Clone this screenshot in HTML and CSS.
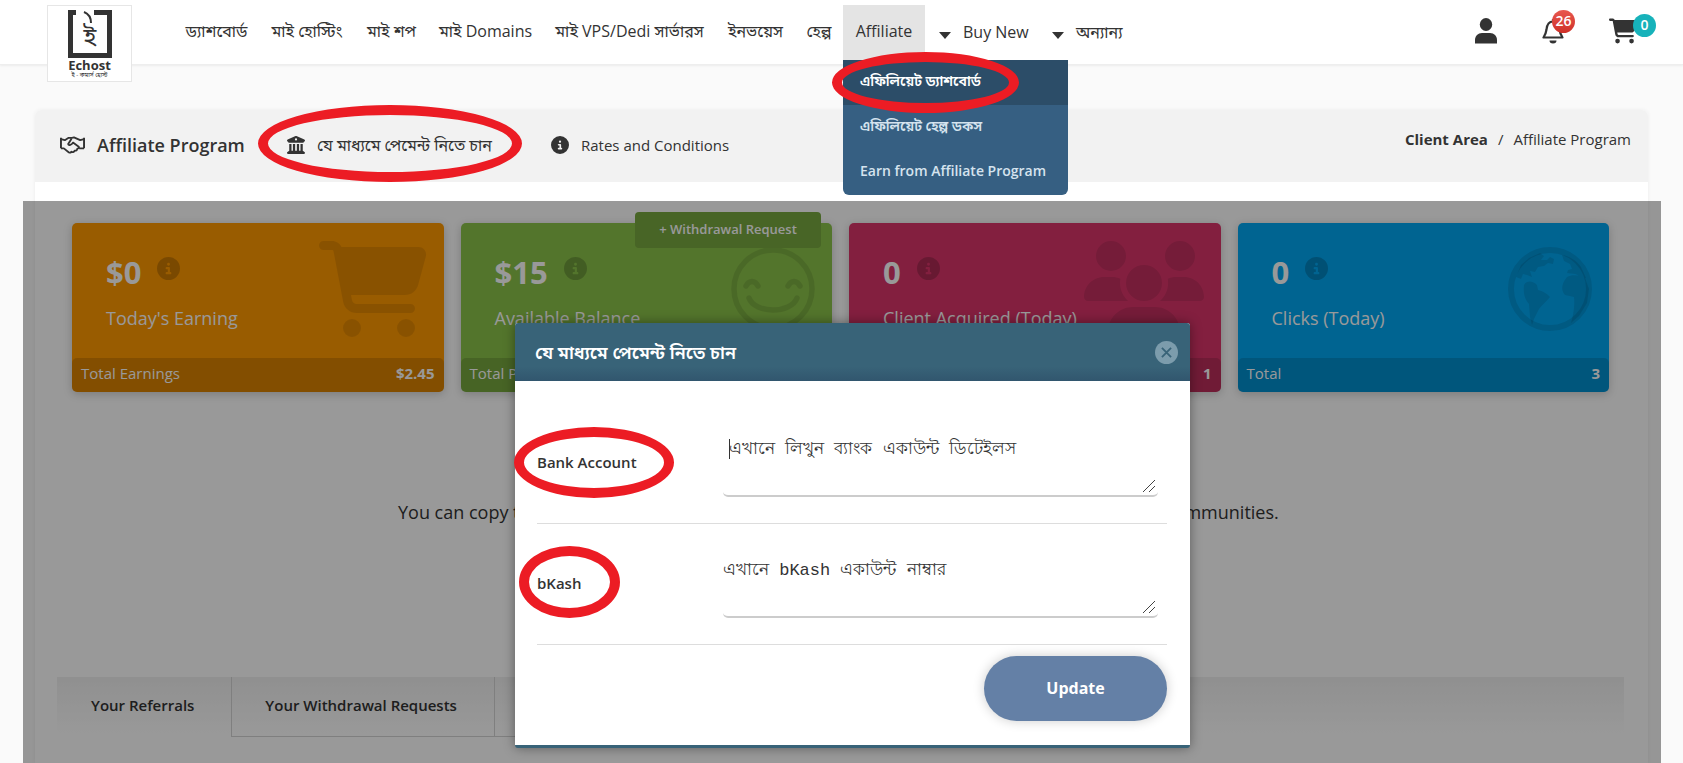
FILE: index.html
```html
<!DOCTYPE html>
<html lang="bn">
<head>
  <meta charset="UTF-8">
  <meta name="viewport" content="width=device-width, initial-scale=1.0">
  <title>Affiliate Program - Echost</title>
  <link rel="stylesheet" href="styles.css">
</head>
<body>
  <svg class="sprite" aria-hidden="true">
    <symbol id="i-cart" viewBox="0 0 576 512"><path d="M0 24C0 10.700 10.700 0 24 0H69.500c22 0 41.500 12.800 50.600 32h411c26.300 0 45.500 25 38.600 50.400l-41 152.300c-8.500 31.400-37 53.300-69.500 53.300H170.700l5.400 28.500c2.200 11.300 12.100 19.500 23.600 19.500H488c13.300 0 24 10.700 24 24s-10.700 24-24 24H199.700c-34.600 0-64.300-24.600-70.700-58.500L77.400 54.500c-.7-3.800-4-6.500-7.900-6.500H24C10.700 48 0 37.300 0 24zM128 464a48 48 0 1 1 96 0 48 48 0 1 1 -96 0zm336-48a48 48 0 1 1 0 96 48 48 0 1 1 0-96z"/></symbol>
    <symbol id="i-users" viewBox="0 0 640 512"><path d="M144 0a80 80 0 1 1 0 160A80 80 0 1 1 144 0zM512 0a80 80 0 1 1 0 160A80 80 0 1 1 512 0zM0 298.700C0 239.800 47.800 192 106.700 192h42.700c15.900 0 31 3.500 44.600 9.700c-1.300 7.200-1.900 14.700-1.900 22.300c0 38.200 16.800 72.500 43.300 96H21.300C9.600 320 0 310.400 0 298.700zM405.300 320c26.600-23.500 43.300-57.800 43.300-96c0-7.600-.7-15-1.900-22.300c13.600-6.300 28.700-9.700 44.600-9.700h42.700C592.200 192 640 239.800 640 298.700c0 11.800-9.600 21.300-21.300 21.300H405.300zM224 224a96 96 0 1 1 192 0 96 96 0 1 1 -192 0zM128 485.300C128 411.700 187.700 352 261.300 352H378.700C452.300 352 512 411.700 512 485.300c0 14.700-11.900 26.700-26.700 26.700H154.700c-14.700 0-26.700-11.900-26.700-26.700z"/></symbol>
    <symbol id="i-info" viewBox="0 0 512 512"><path d="M256 512A256 256 0 1 0 256 0a256 256 0 1 0 0 512zM216 336h24V272H216c-13.300 0-24-10.700-24-24s10.700-24 24-24h48c13.300 0 24 10.700 24 24v88h8c13.300 0 24 10.700 24 24s-10.700 24-24 24H216c-13.300 0-24-10.700-24-24s10.700-24 24-24zm40-208a32 32 0 1 1 0 64 32 32 0 1 1 0-64z"/></symbol>
    <symbol id="i-bank" viewBox="0 0 512 512"><path d="M243.400 2.600l-224 96c-14 6-21.800 21-18.700 35.800S16.800 160 32 160v8c0 13.300 10.700 24 24 24H456c13.300 0 24-10.700 24-24v-8c15.200 0 28.300-10.700 31.300-25.600s-4.800-29.900-18.700-35.800l-224-96c-8-3.400-17.200-3.400-25.200 0zM128 224H64V420l-50 33c-11.700 7.800-17 22.400-12.900 35.900S17.900 512 32 512H480c14.100 0 26.500-9.200 30.600-22.700s-1.100-28.100-12.900-35.900L448 420V224H384V416H344V224H280V416H232V224H168V416H128V224zM256 64a32 32 0 1 1 0 64 32 32 0 1 1 0-64z"/></symbol>
    <symbol id="i-user" viewBox="0 0 22 26"><ellipse cx="11" cy="6.500" rx="6.200" ry="6.500"/><path d="M0 25.500V22c0-4 3-7 7-7h8c4 0 7 3 7 7v3.500z"/></symbol>
    <symbol id="i-bell" viewBox="0 0 22 26"><path d="M11 1v2M1.500 19.500h19c-2-3-2.500-4-3-8-.5-5-2-8-6.500-8s-6 3-6.500 8c-.5 4-1 5-3 8z" fill="none" stroke="currentColor" stroke-width="2.200" stroke-linejoin="round"/><path d="M7.500 22.500h7a3.500 3 0 0 1-7 0z"/></symbol>
    <symbol id="i-smile" viewBox="0 0 84 84"><g fill="none" stroke="currentColor" stroke-width="5.500" stroke-linecap="round"><circle cx="42" cy="42" r="39"/><path d="M15 39c3-6 9-6 12 0M57 39c3-6 9-6 12 0M18 51c6 16 42 16 48 0"/></g></symbol>
    <symbol id="i-globe" viewBox="0 0 84 84"><circle cx="42" cy="42" r="39" fill="none" stroke="currentColor" stroke-width="6"/><path d="M8 30l5-12 8-7 11-5 4 3-3 4h6l3-3 4 2-1 5-5-1-4 3-6 1-3 5-5-1 2 6-5-2-4-1-2 5zM16 38c3-5 9-4 13 0l1 5c5 1 8 3 12 7-3 4-8 8-11 12l-5 10-2 6-2-8-1-13c-4-4-6-10-5-19zM54 8c8 1 15 6 19 12l5 11c-5 0-7-3-11-4l-8-1 1-3 4-1-2-5-6-3zM59 30c6-4 13 0 17-2l5 14-2 14-8 13-8 7c2-7 4-16 3-26l-9-2c-4-4-4-11 2-18z"/></symbol>
    <symbol id="i-handshake" viewBox="0 0 26 18"><path d="M1 1.500v11M25 1.500v11" stroke="currentColor" stroke-width="2"/><path d="M1 3l4 1 4-2.500h3.500l2-.5L21 4l4-1M1 12.500h3l5 4c1 .7 2 .5 3-.5 1.500 1 3 0 3.300-1.200 1.500.4 2.700-.8 2.700-2 1.200 0 2-1 1.500-2L13.500 6.500C12 9 9 10 8.500 8l3.500-5.500M25 12.500h-5" fill="none" stroke="currentColor" stroke-width="1.900" stroke-linejoin="round"/></symbol>
  </svg>

  <header class="topbar">
    <a href="#" class="logo" aria-label="Echost">
      <svg class="logo-mark" viewBox="0 0 44 48">
        <path d="M0 0h8v5H5v38h34V5H26V0h18v48H0z"/>
        <path d="M16 2c5 2 7 6 7 11" fill="none" stroke="currentColor" stroke-width="2"/>
        <text x="22" y="35" text-anchor="middle">ই</text>
      </svg>
      <span class="logo-name">Echost</span>
      <span class="logo-sub">ই - কমার্স হোস্ট</span>
    </a>
    <nav class="menu">
      <a href="#">ড্যাশবোর্ড</a>
      <a href="#">মাই হোস্টিং</a>
      <a href="#">মাই শপ</a>
      <a href="#">মাই Domains</a>
      <a href="#">মাই VPS/Dedi সার্ভারস</a>
      <a href="#">ইনভয়েস</a>
      <a href="#">হেল্প</a>
      <div class="has-sub">
        <a href="#" class="active">Affiliate</a>
        <div class="submenu">
          <a href="#" class="current">এফিলিয়েট ড্যাশবোর্ড<span class="ring ring-sub"></span></a>
          <a href="#">এফিলিয়েট হেল্প ডকস</a>
          <a href="#">Earn from Affiliate Program</a>
        </div>
      </div>
      <a href="#" class="drop">Buy New</a>
      <a href="#" class="drop">অন্যান্য</a>
    </nav>
    <div class="tools">
      <a href="#" aria-label="Account"><svg class="tool-icon"><use href="#i-user"/></svg></a>
      <a href="#" aria-label="Notifications"><svg class="tool-icon"><use href="#i-bell"/></svg><span class="badge badge-red">26</span></a>
      <a href="#" aria-label="Cart"><svg class="tool-icon tool-cart"><use href="#i-cart"/></svg><span class="badge badge-teal">0</span></a>
    </div>
  </header>

  <main class="page">
    <div class="page-head">
      <svg class="icon-hands"><use href="#i-handshake"/></svg>
      <h1>Affiliate Program</h1>
      <a href="#" class="head-link link-pay"><svg class="icon"><use href="#i-bank"/></svg>যে মাধ্যমে পেমেন্ট নিতে চান<span class="ring ring-head"></span></a>
      <a href="#" class="head-link"><svg class="icon"><use href="#i-info"/></svg>Rates and Conditions</a>
      <div class="crumbs"><a href="#">Client Area</a><span>/</span><span>Affiliate Program</span></div>
    </div>

    <div class="cards">
      <section class="card orange">
        <svg class="card-icon"><use href="#i-cart"/></svg>
        <div class="card-body">
          <div class="amount">$0 <svg class="info"><use href="#i-info"/></svg></div>
          <div class="caption">Today's Earning</div>
        </div>
        <div class="card-foot"><span>Total Earnings</span><b>$2.45</b></div>
      </section>
      <section class="card green">
        <svg class="card-icon round"><use href="#i-smile"/></svg>
        <button type="button" class="withdraw">+ Withdrawal Request</button>
        <div class="card-body">
          <div class="amount">$15 <svg class="info"><use href="#i-info"/></svg></div>
          <div class="caption">Available Balance</div>
        </div>
        <div class="card-foot"><span>Total Paid</span><b>$0</b></div>
      </section>
      <section class="card pink">
        <svg class="card-icon wide"><use href="#i-users"/></svg>
        <div class="card-body">
          <div class="amount">0 <svg class="info"><use href="#i-info"/></svg></div>
          <div class="caption">Client Acquired (Today)</div>
        </div>
        <div class="card-foot"><span>Total</span><b>1</b></div>
      </section>
      <section class="card blue">
        <svg class="card-icon round"><use href="#i-globe"/></svg>
        <div class="card-body">
          <div class="amount">0 <svg class="info"><use href="#i-info"/></svg></div>
          <div class="caption">Clicks (Today)</div>
        </div>
        <div class="card-foot"><span>Total</span><b>3</b></div>
      </section>
    </div>

    <p class="hint">You can copy the affiliate link below and share it with your friends on the web and in online communities.</p>

    <div class="tabs">
      <a href="#" class="tab-active">Your Referrals</a>
      <a href="#">Your Withdrawal Requests</a>
      <a href="#">Your Commissions</a>
    </div>
  </main>

  <div class="overlay">
    <form class="modal">
      <div class="modal-head">
        <h2>যে মাধ্যমে পেমেন্ট নিতে চান</h2>
        <button type="button" class="close" aria-label="Close"><svg viewBox="0 0 12 12"><path d="M1 1l10 10M11 1L1 11"/></svg></button>
      </div>
      <div class="modal-body">
        <div class="field">
          <label for="bank">Bank Account<span class="ring ring-bank"></span></label>
          <textarea id="bank" class="focused">এখানে লিখুন ব্যাংক একাউন্ট ডিটেইলস</textarea>
        </div>
        <div class="field">
          <label for="bkash">bKash<span class="ring ring-bkash"></span></label>
          <textarea id="bkash">এখানে bKash একাউন্ট নাম্বার</textarea>
        </div>
        <button type="submit" class="update">Update</button>
      </div>
    </form>
  </div>
</body>
</html>
```

FILE: styles.css
```css
* {
  box-sizing: border-box;
}
body {
  margin: 0;
  min-height: 100vh;
  position: relative;
  overflow: hidden;
  background: #fafafa;
  color: #333;
  font-family: "Open Sans", "Noto Sans", "Noto Sans Bengali", sans-serif;
  font-size: 16px;
  line-height: 24px;
}
a {
  color: inherit;
  text-decoration: none;
}
svg {
  fill: currentColor;
}
.sprite {
  display: none;
}

/* top bar */
.topbar {
  display: flex;
  height: 65px;
  padding: 5px 27px 0 47px;
  background: #fff;
  border-bottom: 1px solid #eee;
  box-shadow: 0 1px 2px rgba(0, 0, 0, .06);
}
.logo {
  width: 85px;
  height: 77px;
  flex: none;
  display: flex;
  flex-direction: column;
  align-items: center;
  padding-top: 4px;
  background: #fff;
  border: 1px solid #e6e6e6;
  z-index: 1;
}
.logo-mark {
  width: 44px;
  height: 48px;
  font-size: 24px;
}
.logo-name {
  font-size: 13px;
  line-height: 14px;
  font-weight: 700;
}
.logo-sub {
  font-size: 6px;
  line-height: 6px;
}
.menu {
  display: grid;
  grid-template-columns: 85px 96px 73px 115px 173px 79px 48px 82px 113px 100px;
  margin-left: 42px;
  height: 53px;
  line-height: 53px;
  text-align: center;
  white-space: nowrap;
}
.has-sub {
  position: relative;
}
.active {
  display: block;
  height: 55px;
  background: #e4e4e4;
}
.drop {
  display: flex;
  align-items: center;
  gap: 12px;
  padding-left: 14px;
}
.drop::before {
  content: "";
  margin-top: 6px;
  border: 6px solid transparent;
  border-top: 7px solid #333;
  border-bottom: 0;
}
.submenu {
  position: absolute;
  z-index: 5;
  top: 55px;
  left: 0;
  width: 225px;
  background: #365f82;
  border-radius: 0 0 6px 6px;
  font-size: 14px;
  font-weight: 600;
  line-height: 42px;
  text-align: left;
  color: #d5e3ee;
}
.submenu a {
  display: block;
  position: relative;
  height: 45px;
  padding-left: 17px;
}
.submenu .current {
  background: #2c4d68;
  color: #fff;
}
.tools {
  display: flex;
  gap: 45px;
  margin-left: auto;
  padding-top: 13px;
}
.tools a {
  position: relative;
}
.tool-icon {
  display: block;
  width: 22px;
  height: 26px;
}
.tool-cart {
  width: 28px;
  margin-right: 19px;
}
.badge {
  position: absolute;
  width: 23px;
  height: 23px;
  border-radius: 50%;
  color: #fff;
  font-size: 14px;
  font-weight: 600;
  line-height: 22px;
  text-align: center;
}
.badge-red {
  top: -8px;
  left: 10px;
  background: linear-gradient(#e8584f, #cf3028);
}
.badge-teal {
  top: -4px;
  right: 0;
  background: #17b2ba;
}

/* red ellipses */
.ring {
  position: absolute;
  border: 10px solid #ec1c24;
  border-radius: 50%;
  pointer-events: none;
}
.ring-sub {
  z-index: 2;
  top: -8px;
  left: -11px;
  width: 187px;
  height: 61px;
}
.ring-head {
  top: -28px;
  left: -29px;
  width: 264px;
  height: 77px;
}
.ring-bank {
  top: -23px;
  left: -23px;
  width: 160px;
  height: 71px;
}
.ring-bkash {
  top: -25px;
  left: -18px;
  width: 101px;
  height: 72px;
}

/* page */
.page {
  margin: 45px 35px 0;
  background: #fff;
  border-radius: 6px 6px 0 0;
  box-shadow: 0 0 4px rgba(0, 0, 0, .06);
}
.page-head {
  display: flex;
  align-items: center;
  height: 72px;
  padding: 0 17px 2px 25px;
  background: #f2f2f2;
  border-radius: 6px 6px 0 0;
  white-space: nowrap;
}
.icon-hands {
  width: 25px;
  height: 18px;
}
h1 {
  width: 190px;
  margin: 0 0 0 12px;
  font-size: 18px;
  line-height: 24px;
  font-weight: 600;
}
.head-link {
  position: relative;
  display: flex;
  align-items: center;
  font-size: 15px;
}
.link-pay {
  width: 264px;
  font-size: 16px;
}
.icon {
  width: 18px;
  height: 18px;
  margin-right: 12px;
}
.crumbs {
  display: flex;
  gap: 10px;
  margin: 0 0 12px auto;
  font-size: 15px;
}
.crumbs a {
  font-weight: 700;
}

/* cards */
.cards {
  display: grid;
  grid-template-columns: repeat(4, 1fr);
  gap: 17px;
  padding: 41px 39px 0 37px;
}
.card {
  position: relative;
  height: 169px;
  border-radius: 5px;
  box-shadow: 0 2px 10px rgba(0, 0, 0, .2);
  color: #fff;
  display: flex;
  flex-direction: column;
}
.orange {
  background: #ff9900;
}
.green {
  background: #8bc34a;
}
.pink {
  background: #da356a;
}
.blue {
  background: #00a7f2;
}
.card-icon {
  position: absolute;
  top: 18px;
  right: 17px;
  width: 108px;
  height: 96px;
  color: rgba(0, 0, 0, .1);
}
.card-icon.wide {
  width: 120px;
}
.card-icon.round {
  top: 24px;
  width: 84px;
  height: 84px;
}
.card-body {
  flex: 1;
  padding: 30px 34px 0;
}
.amount {
  display: flex;
  gap: 16px;
  font-size: 31px;
  line-height: 38px;
  font-weight: 700;
}
.info {
  width: 23px;
  height: 23px;
  margin-top: 4px;
  color: rgba(0, 0, 0, .2);
}
.caption {
  margin-top: 15px;
  font-size: 18px;
  line-height: 24px;
}
.card-foot {
  display: flex;
  justify-content: space-between;
  height: 34px;
  padding: 0 9px;
  border-radius: 5px;
  background: rgba(0, 0, 0, .14);
  font-size: 15px;
  line-height: 30px;
}
.withdraw {
  position: absolute;
  top: -11px;
  right: 11px;
  width: 186px;
  height: 36px;
  padding: 0 0 2px;
  border: 0;
  border-radius: 4px;
  background: #78a840;
  color: #fff;
  font: 600 13px "Open Sans", sans-serif;
}
.hint {
  margin: 108px 0 0;
  padding-left: 363px;
  font-size: 18px;
  line-height: 24px;
  white-space: nowrap;
}
.tabs {
  display: flex;
  margin: 153px 24px 0 22px;
  height: 86px;
  background: linear-gradient(#f0f0f0, #fff 56px);
  font-size: 15px;
  font-weight: 600;
}
.tabs a {
  height: 60px;
  padding: 0 37px 0 33px;
  border-left: 1px solid #d4d4d4;
  border-bottom: 1px solid #d4d4d4;
  line-height: 56px;
  white-space: nowrap;
}
.tabs .tab-active {
  border-color: transparent;
}

/* modal */
.overlay {
  position: absolute;
  top: 201px;
  right: 22px;
  bottom: 0;
  left: 23px;
  background: rgba(0, 0, 0, .4);
}
.modal {
  width: 675px;
  margin: 122px 0 0 492px;
  background: #fff;
  border-bottom: 3px solid #386378;
  border-radius: 3px;
  box-shadow: 0 0 12px rgba(0, 0, 0, .4);
}
.modal-head {
  display: flex;
  align-items: center;
  justify-content: space-between;
  height: 58px;
  padding: 0 12px 0 20px;
  border-radius: 3px 3px 0 0;
  background: linear-gradient(#386378 75%, #31566e);
  color: #fff;
}
h2 {
  margin: 0;
  font-size: 18px;
  font-weight: 600;
}
.close {
  width: 23px;
  height: 23px;
  padding: 6px;
  border: 0;
  border-radius: 50%;
  background: #7c9cac;
}
.close svg {
  display: block;
  stroke: #386378;
  stroke-width: 2;
}
.modal-body {
  display: flex;
  flex-direction: column;
  padding: 22px 23px 24px 22px;
}
.field {
  display: flex;
  align-items: center;
  height: 121px;
  padding-bottom: 3px;
  border-bottom: 1px solid #ddd;
}
.field label {
  position: relative;
  width: 186px;
  font-size: 15px;
  font-weight: 600;
}
.field textarea {
  width: 435px;
  height: 71px;
  padding: 9px 0;
  border: 0;
  border-bottom: 2px solid #ccc;
  border-radius: 5px;
  outline: 0;
  background: transparent;
  color: #333;
  font: 17px/30px "Liberation Mono", monospace;
}
.field textarea::-webkit-resizer {
  background: linear-gradient(135deg, transparent 47%, #444 47%, #444 53%, transparent 53%, transparent 72%, #444 72%, #444 78%, transparent 78%) 0 0 / 12px 12px no-repeat;
}
.field .focused {
  background: linear-gradient(#333, #333) 6px 13px / 1px 20px no-repeat;
  text-indent: 6px;
}
.update {
  align-self: flex-end;
  width: 183px;
  height: 65px;
  margin-top: 11px;
  padding: 0 0 2px;
  border: 0;
  border-radius: 33px;
  background: #6480a6;
  box-shadow: 0 0 12px rgba(0, 0, 0, .2);
  color: #fff;
  font: 700 16px "Open Sans", sans-serif;
}
```
